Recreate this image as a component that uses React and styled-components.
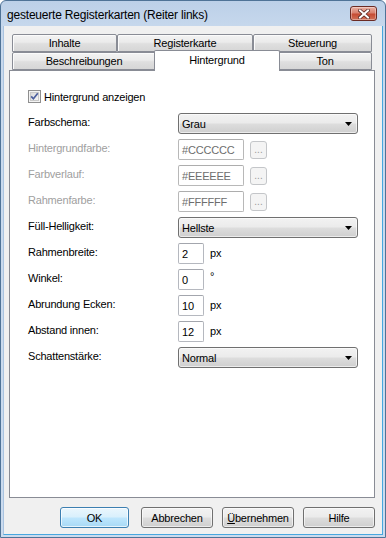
import React from 'react';
import styled, { createGlobalStyle } from 'styled-components';

const Global = createGlobalStyle`
  html, body { margin: 0; padding: 0; background: #ffffff; }
  body { font-family: "Liberation Sans", Arial, sans-serif; }
  * { box-sizing: border-box; }
`;

const Window = styled.div`
  width: 386px;
  height: 538px;
  display: flex;
  flex-direction: column;
  border: 1px solid #4f7397;
  border-radius: 6px 6px 0 0;
  background: linear-gradient(#bcd0e8, #c8d9ed 30px, #cbdbee);
  overflow: hidden;
`;

const TitleBar = styled.div`
  height: 25px;
  flex: none;
  display: flex;
  align-items: center;
  justify-content: space-between;
  padding: 1px 8px 0 6px;
`;

const Title = styled.span`
  font-size: 12px;
  letter-spacing: -0.2px;
  color: #000;
  padding-top: 2px;
`;

const CloseButton = styled.div`
  width: 27px;
  height: 15px;
  margin-top: -1px;
  border: 1px solid #6b2b24;
  border-radius: 3px;
  background: linear-gradient(#e9b0a4 0%, #d9826f 45%, #c64b33 55%, #d07158 100%);
  box-shadow: inset 0 0 0 1px rgba(255, 255, 255, 0.35);
  display: flex;
  align-items: center;
  justify-content: center;
`;

const Client = styled.div`
  flex: 1;
  margin: 0 2px 2px 2px;
  background: #f0f0f0;
  border: 1px solid #47a7df;
  border-top: none;
  border-left-color: #a9c3e0;
  display: flex;
  flex-direction: column;
  padding: 8px 7px 0 5px;
`;

const TabStrip = styled.div`
  width: 360px;
  margin-left: 3px;
  display: flex;
  flex-direction: column;
`;

const TabRow = styled.div`
  display: flex;
  align-items: flex-start;
  height: 18px;
`;

const Tab = styled.div`
  width: ${(p) => p.$w}px;
  height: ${(p) => (p.$active ? 21 : 18)}px;
  margin: ${(p) => (p.$active ? '-2px -2px -1px -2px' : '0')};
  position: ${(p) => (p.$active ? 'relative' : 'static')};
  z-index: ${(p) => (p.$active ? 2 : 'auto')};
  border: 1px solid #898c95;
  border-bottom: ${(p) => (p.$active ? 'none' : '1px solid #898c95')};
  border-radius: 2px 2px 0 0;
  background: ${(p) =>
    p.$active
      ? '#ffffff'
      : 'linear-gradient(#f3f3f3 0%, #ebebeb 45%, #dfdfdf 55%, #d6d6d6 100%)'};
  box-shadow: ${(p) => (p.$active ? 'none' : 'inset 1px 1px 0 #fbfbfb')};
  display: flex;
  justify-content: center;
  align-items: ${(p) => (p.$active ? 'flex-start' : 'center')};
  padding-top: ${(p) => (p.$active ? '3px' : '0')};
  font-size: 11px;
  letter-spacing: -0.2px;
  color: #000;
  line-height: 13px;
`;

const Panel = styled.div`
  height: 428px;
  background: #ffffff;
  border: 1px solid #898c95;
  padding: 19px 18px 0 18px;
  display: flex;
  flex-direction: column;
  position: relative;
  z-index: 1;
`;

const CheckRow = styled.label`
  display: flex;
  align-items: center;
  gap: 3px;
  height: 13px;
  font-size: 11px;
  letter-spacing: -0.2px;
  color: #000;
`;

const Form = styled.div`
  margin-top: 10px;
  display: grid;
  grid-template-columns: 150px auto;
  grid-auto-rows: 21px;
  row-gap: 5px;
  align-items: center;
`;

const Label = styled.span`
  font-size: 11px;
  letter-spacing: -0.2px;
  line-height: 13px;
  padding-bottom: 2px;
  color: ${(p) => (p.$disabled ? '#a0a0a0' : '#000')};
`;

const Control = styled.div`
  display: flex;
  align-items: center;
  height: 21px;
`;

const Select = styled.div`
  width: 180px;
  height: 21px;
  border: 1px solid #707070;
  border-radius: 3px;
  background: linear-gradient(#f2f2f2 0%, #ebebeb 48%, #dddddd 52%, #cfcfcf 100%);
  box-shadow: inset 0 0 0 1px rgba(255, 255, 255, 0.6);
  display: flex;
  align-items: center;
  justify-content: space-between;
  padding: 0 5px 0 3px;
  font-size: 11px;
  letter-spacing: -0.2px;
  color: #000;
`;

const TextBox = styled.div`
  width: ${(p) => p.$w}px;
  height: 21px;
  border: 1px solid ${(p) => (p.$disabled ? '#b8b8b8' : '#b5b8bf')};
  border-top-color: ${(p) => (p.$disabled ? '#adadad' : '#a3a6ad')};
  border-radius: 2px;
  background: #ffffff;
  display: flex;
  align-items: center;
  padding-left: 3px;
  font-size: 11px;
  letter-spacing: -0.2px;
  color: ${(p) => (p.$disabled ? '#6d6d6d' : '#000')};
`;

const DotsButton = styled.div`
  width: 17px;
  height: 18px;
  margin-left: 6px;
  border: 1px solid #c4c6c9;
  border-radius: 3px;
  background: #f4f4f4;
  display: flex;
  align-items: flex-end;
  justify-content: center;
  padding-bottom: 3px;
  font-size: 10px;
  line-height: 10px;
  color: #9a9a9a;
`;

const Unit = styled.span`
  margin-left: 6px;
  font-size: 11px;
  letter-spacing: -0.2px;
  padding-bottom: ${(p) => (p.$raised ? '8px' : '2px')};
  color: #000;
`;

const ButtonBar = styled.div`
  margin-top: 9px;
  display: flex;
  justify-content: flex-end;
  gap: 9px;
`;

const Button = styled.div`
  width: ${(p) => p.$w}px;
  height: 21px;
  margin-right: ${(p) => p.$mr || 0}px;
  border: 1px solid ${(p) => (p.$primary ? '#3c7fb1' : '#707070')};
  border-radius: 3px;
  background: ${(p) =>
    p.$primary
      ? 'linear-gradient(#eaf6fd 0%, #d9f0fc 48%, #bee6fd 52%, #a7d9f5 100%)'
      : 'linear-gradient(#f2f2f2 0%, #ebebeb 48%, #dddddd 52%, #cfcfcf 100%)'};
  box-shadow: inset 0 0 0 1px ${(p) => (p.$primary ? 'rgba(255,255,255,0.7)' : 'rgba(255,255,255,0.6)')};
  display: flex;
  align-items: center;
  justify-content: center;
  font-size: 11px;
  letter-spacing: -0.2px;
  color: #000;
`;

const Mnemonic = styled.span`
  text-decoration: underline;
`;

const Arrow = () => (
  <svg width="7" height="4" viewBox="0 0 7 4">
    <polygon points="0,0 7,0 3.5,4" fill="#000" />
  </svg>
);

const CloseX = () => (
  <svg width="12" height="10" viewBox="0 0 12 10">
    <path
      d="M2 1.5 L10 8.5 M10 1.5 L2 8.5"
      stroke="#5a2a25"
      strokeWidth="3.6"
      strokeLinecap="square"
      fill="none"
    />
    <path
      d="M2 1.5 L10 8.5 M10 1.5 L2 8.5"
      stroke="#ffffff"
      strokeWidth="2"
      strokeLinecap="square"
      fill="none"
    />
  </svg>
);

const CheckBox = () => (
  <svg width="13" height="13" viewBox="0 0 13 13">
    <defs>
      <linearGradient id="cbg" x1="0" y1="0" x2="1" y2="1">
        <stop offset="0" stopColor="#d8d8d8" />
        <stop offset="1" stopColor="#f7f7f7" />
      </linearGradient>
    </defs>
    <rect x="0.5" y="0.5" width="12" height="12" fill="#f4f4f4" stroke="#8f8f8f" />
    <rect x="2.5" y="2.5" width="8" height="8" fill="url(#cbg)" stroke="#c9c9c9" />
    <path d="M3.2 6.4 L5.4 8.8 L9.8 3.3" stroke="#4c5f9e" strokeWidth="1.7" fill="none" />
  </svg>
);

const colorRows = [
  { label: 'Hintergrundfarbe:', value: '#CCCCCC' },
  { label: 'Farbverlauf:', value: '#EEEEEE' },
  { label: 'Rahmenfarbe:', value: '#FFFFFF' },
];

const numRows = [
  { label: 'Rahmenbreite:', value: '2', unit: 'px' },
  { label: 'Winkel:', value: '0', unit: '°', raised: true },
  { label: 'Abrundung Ecken:', value: '10', unit: 'px' },
  { label: 'Abstand innen:', value: '12', unit: 'px' },
];

export default function App() {
  return (
    <>
      <Global />
      <Window>
        <TitleBar>
          <Title>gesteuerte Registerkarten (Reiter links)</Title>
          <CloseButton>
            <CloseX />
          </CloseButton>
        </TitleBar>
        <Client>
          <TabStrip>
            <TabRow>
              <Tab $w={105}>Inhalte</Tab>
              <Tab $w={136}>Registerkarte</Tab>
              <Tab $w={119}>Steuerung</Tab>
            </TabRow>
            <TabRow>
              <Tab $w={144}>Beschreibungen</Tab>
              <Tab $w={126} $active>
                Hintergrund
              </Tab>
              <Tab $w={94}>Ton</Tab>
            </TabRow>
          </TabStrip>
          <Panel>
            <CheckRow>
              <CheckBox />
              Hintergrund anzeigen
            </CheckRow>
            <Form>
              <Label>Farbschema:</Label>
              <Control>
                <Select>
                  <span>Grau</span>
                  <Arrow />
                </Select>
              </Control>
              {colorRows.map((r) => (
                <React.Fragment key={r.label}>
                  <Label $disabled>{r.label}</Label>
                  <Control>
                    <TextBox $w={66} $disabled>
                      {r.value}
                    </TextBox>
                    <DotsButton>...</DotsButton>
                  </Control>
                </React.Fragment>
              ))}
              <Label>Füll-Helligkeit:</Label>
              <Control>
                <Select>
                  <span>Hellste</span>
                  <Arrow />
                </Select>
              </Control>
              {numRows.map((r) => (
                <React.Fragment key={r.label}>
                  <Label>{r.label}</Label>
                  <Control>
                    <TextBox $w={26}>{r.value}</TextBox>
                    <Unit $raised={r.raised}>{r.unit}</Unit>
                  </Control>
                </React.Fragment>
              ))}
              <Label>Schattenstärke:</Label>
              <Control>
                <Select>
                  <span>Normal</span>
                  <Arrow />
                </Select>
              </Control>
            </Form>
          </Panel>
          <ButtonBar>
            <Button $w={69} $mr={3} $primary>
              OK
            </Button>
            <Button $w={72}>Abbrechen</Button>
            <Button $w={72}>
              <Mnemonic>Ü</Mnemonic>bernehmen
            </Button>
            <Button $w={72}>Hilfe</Button>
          </ButtonBar>
        </Client>
      </Window>
    </>
  );
}
